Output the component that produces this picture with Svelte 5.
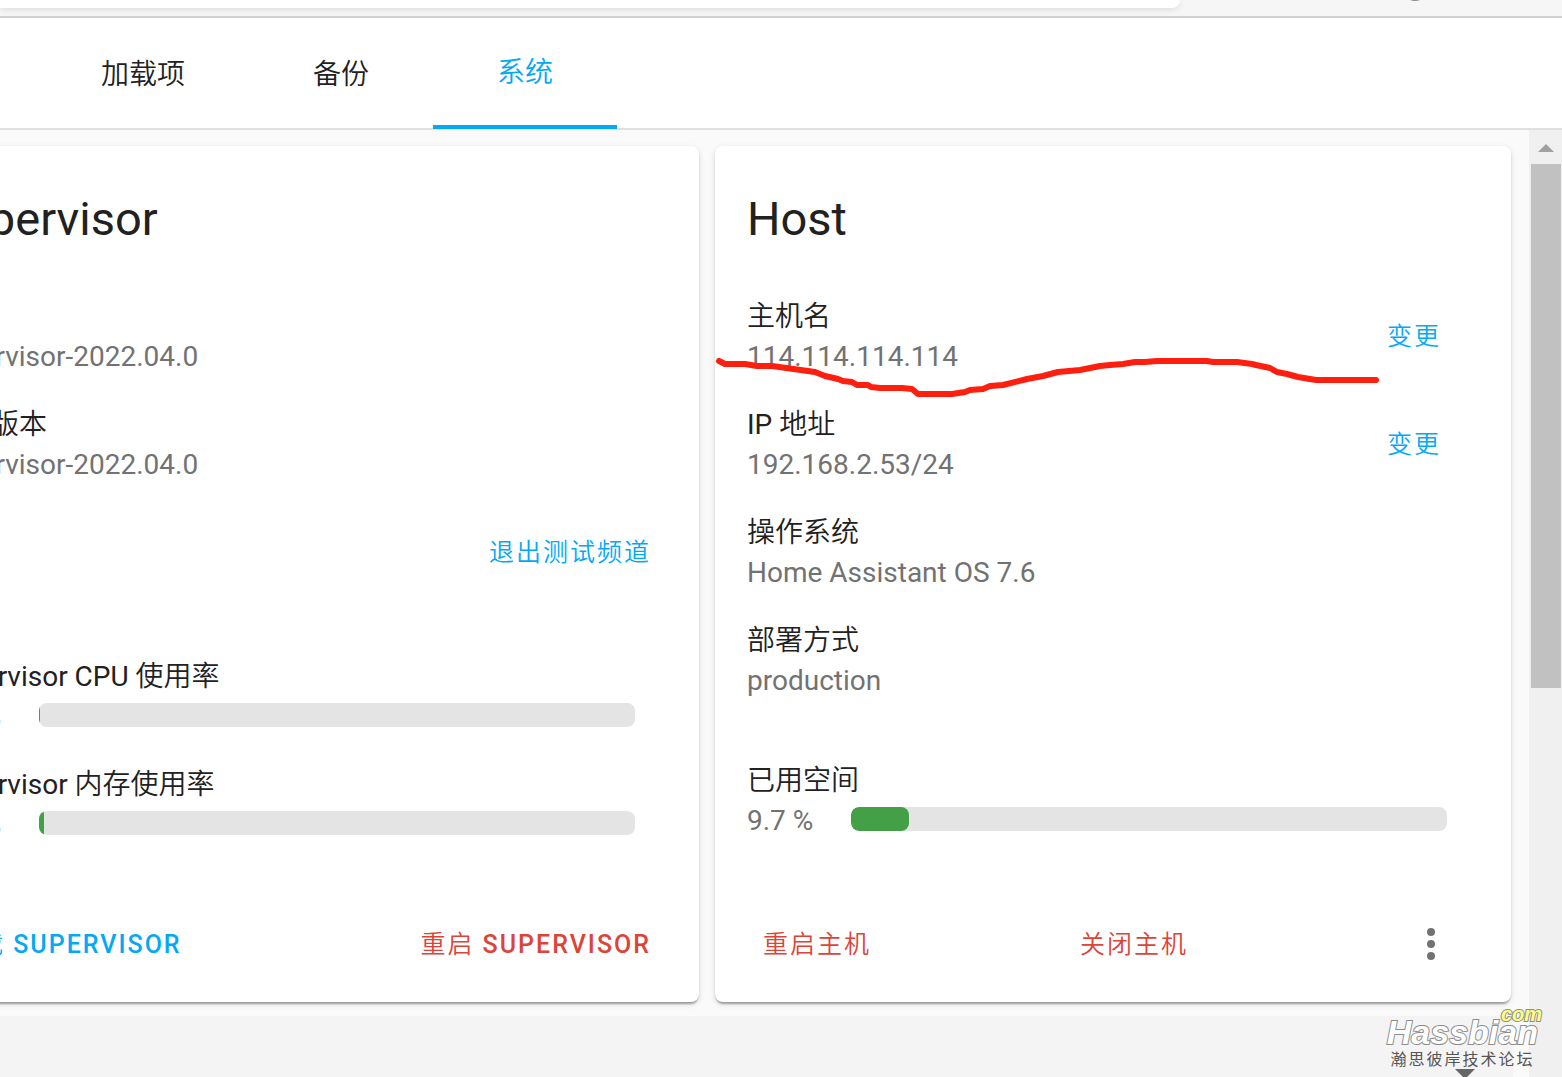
<script>
  const tabs = [
    { id: 'addons', label: '加载项' },
    { id: 'backups', label: '备份' },
    { id: 'system', label: '系统' }
  ];
  let activeTab = $state('system');

  const supervisorRows = [
    { label: '版本', value: 'supervisor-2022.04.0' },
    { label: '最新版本', value: 'supervisor-2022.04.0' },
    { label: '频道', value: 'beta', action: '退出测试频道' }
  ];
  const supervisorMetrics = [
    { label: 'Supervisor CPU 使用率', value: 0.1 },
    { label: 'Supervisor 内存使用率', value: 0.9 }
  ];

  const hostRows = [
    { label: '主机名', value: '114.114.114.114', action: '变更' },
    { label: 'IP 地址', value: '192.168.2.53/24', action: '变更' },
    { label: '操作系统', value: 'Home Assistant OS 7.6' },
    { label: '部署方式', value: 'production' }
  ];
  const hostMetrics = [{ label: '已用空间', value: 9.7 }];
</script>

{#snippet settingsRow(row)}
  <div class="row">
    <div class="row-text">
      <span class="label">{row.label}</span>
      <span class="value">{row.value}</span>
    </div>
    {#if row.action}
      <button class="text-button">{row.action}</button>
    {/if}
  </div>
{/snippet}

{#snippet metric(item)}
  <div class="row metric">
    <span class="label">{item.label}</span>
    <div class="metric-line">
      <span class="value">{item.value} %</span>
      <div class="bar" role="meter" aria-label={item.label} aria-valuenow={item.value} aria-valuemin="0" aria-valuemax="100">
        <div class="bar-fill" style="width: {item.value}%"></div>
      </div>
    </div>
  </div>
{/snippet}

<div class="page">
  <div class="browser-bar">
    <div class="address"></div>
    <svg class="profile" viewBox="0 0 24 24" aria-hidden="true">
      <circle cx="12" cy="12" r="11" fill="none" stroke="#8a8a8a" stroke-width="2" />
    </svg>
  </div>

  <nav class="tabs">
    {#each tabs as tab}
      <button class="tab" class:active={tab.id === activeTab} onclick={() => (activeTab = tab.id)}>
        {tab.label}
      </button>
    {/each}
  </nav>

  <div class="view">
    <main class="content">
      <div class="cards">
        <section class="card supervisor">
          <h1>Supervisor</h1>
          <div class="card-content">
            <div>
              {#each supervisorRows as row}
                {@render settingsRow(row)}
              {/each}
            </div>
            <div class="metrics">
              {#each supervisorMetrics as item}
                {@render metric(item)}
              {/each}
            </div>
          </div>
          <div class="card-actions">
            <button class="text-button">重载 <span class="latin">Supervisor</span></button>
            <button class="text-button warning">重启 <span class="latin">Supervisor</span></button>
          </div>
        </section>

        <section class="card host">
          <h1>Host</h1>
          <div class="card-content">
            <div>
              {#each hostRows as row}
                {@render settingsRow(row)}
              {/each}
            </div>
            <div class="metrics">
              {#each hostMetrics as item}
                {@render metric(item)}
              {/each}
            </div>
          </div>
          <div class="card-actions">
            <button class="text-button warning">重启主机</button>
            <button class="text-button warning">关闭主机</button>
            <button class="menu-button" aria-label="菜单">
              <svg viewBox="0 0 24 24" aria-hidden="true">
                <path fill="currentColor" d="M12,16A2,2 0 0,1 14,18A2,2 0 0,1 12,20A2,2 0 0,1 10,18A2,2 0 0,1 12,16M12,10A2,2 0 0,1 14,12A2,2 0 0,1 12,14A2,2 0 0,1 10,12A2,2 0 0,1 12,10M12,4A2,2 0 0,1 14,6A2,2 0 0,1 12,8A2,2 0 0,1 10,6A2,2 0 0,1 12,4Z" />
              </svg>
            </button>
          </div>
          <!-- freehand marker stroke over the host name -->
          <svg class="marker" viewBox="0 0 670 50" aria-hidden="true">
            <path d="M4 7 L10 10 H30 L42 12 H57 L100 18 L110 22 L123 25 L128 27 L137 28 L142 31 H153 L156 33 L165 34 H187 L197 35 L203 40 H237 L250 38 L255 36 L268 35 L275 32 L288 31 L312 25 L328 22 L343 18 L365 16 L385 12 L395 11 L408 10 L420 8 H430 L442 7 H492 L498 8 H522 L537 10 L541 11 L555 14 L562 18 L572 20 L583 23 L595 25 L601 26 H661" />
          </svg>
        </section>
      </div>

      <div class="log-panel">
        <select class="log-select" aria-label="日志提供者"><option></option></select>
        <svg class="log-arrow" viewBox="0 0 20 10" aria-hidden="true">
          <path d="M0 0H20L10 10Z" fill="#666" />
        </svg>
      </div>
    </main>

    <div class="scrollbar" aria-hidden="true">
      <svg class="scroll-up" viewBox="0 0 16 8"><path d="M8 0L16 8H0Z" fill="#a0a0a0" /></svg>
      <div class="thumb"></div>
    </div>
  </div>

  <div class="watermark">
    <span class="com">com</span>
    <span class="brand">Hassbian</span>
    <span class="forum">瀚思彼岸技术论坛</span>
  </div>
</div>

<style>
  :global(body) {
    margin: 0;
    background: #fafafa;
  }

  .page {
    position: relative;
    display: flex;
    flex-direction: column;
    height: 100vh;
    overflow: hidden;
    color: #212121;
    font-family: Roboto, 'Noto Sans CJK SC DemiLight', 'Noto Sans CJK SC', sans-serif;
    font-size: 28px;
    line-height: 40px;
  }

  button {
    border: 0;
    margin: 0;
    background: none;
    font: inherit;
    color: inherit;
    cursor: pointer;
  }

  .browser-bar {
    position: relative;
    flex: none;
    height: 16px;
    overflow: hidden;
    background: #f6f6f6;
    border-bottom: 2px solid #d0d0d0;
  }

  .address {
    width: 76%;
    max-width: 1180px;
    height: 8px;
    background: #fff;
    border-radius: 0 0 8px 0;
    box-shadow: 0 2px 6px rgba(0, 0, 0, 0.1);
  }

  .profile {
    position: absolute;
    top: -23px;
    right: 135px;
    width: 24px;
    height: 24px;
  }

  .tabs {
    display: flex;
    flex: none;
    height: 110px;
    padding-left: 37px;
    background: #fff;
    border-bottom: 2px solid #e0e0e0;
  }

  .tab {
    box-sizing: border-box;
    padding: 2px 64px 0;
    height: 111px;
  }

  .tab.active {
    color: #03a9f4;
    border-bottom: 4px solid #03a9f4;
  }

  .view {
    display: flex;
    flex: 1;
    min-height: 0;
  }

  .content {
    flex: 1;
    display: flex;
    flex-direction: column;
    min-width: 0;
    overflow: hidden;
  }

  /* the view is panned to the right, so the first card starts off screen */
  .cards {
    display: grid;
    grid-template-columns: 1fr 1fr;
    gap: 16px;
    margin-left: -97px;
    padding: 16px 18px 14px 0;
  }

  .card {
    position: relative;
    display: flex;
    flex-direction: column;
    background: #fff;
    border-radius: 8px;
    box-shadow: 0 4px 2px -2px rgba(0, 0, 0, 0.2), 0 2px 2px rgba(0, 0, 0, 0.14), 0 2px 6px rgba(0, 0, 0, 0.12);
  }

  h1 {
    margin: 0;
    padding: 41px 32px 32px;
    font-size: 47px;
    line-height: 64px;
    font-weight: 400;
  }

  .card-content {
    display: flex;
    flex: 1;
    flex-direction: column;
    justify-content: space-between;
    padding: 0 64px 31px 32px;
  }

  .supervisor .card-content {
    padding-bottom: 27px;
  }

  .host .metrics {
    margin-top: 32px;
  }

  .row {
    display: flex;
    align-items: center;
    justify-content: space-between;
    height: 108px;
  }

  .row-text {
    display: flex;
    flex-direction: column;
  }

  .label {
    color: #212121;
  }

  .value {
    color: #727272;
  }

  .metric {
    flex-direction: column;
    align-items: stretch;
    justify-content: center;
  }

  .metric-line {
    display: flex;
    align-items: center;
  }

  .metric-line .value {
    width: 104px;
  }

  .bar {
    flex: 1;
    height: 24px;
    margin-bottom: 5px;
    overflow: hidden;
    background: #e4e4e4;
    border-radius: 8px;
  }

  .bar-fill {
    height: 100%;
    background: #43a047;
    border-radius: 8px;
  }

  .text-button {
    padding: 0 6px;
    color: #03a9f4;
    font-size: 25px;
    letter-spacing: 2px;
    text-transform: uppercase;
    white-space: nowrap;
  }

  .latin {
    font-weight: 500;
  }

  .row .text-button {
    margin-right: -22px;
  }

  .host .row .text-button {
    margin-right: 0;
  }

  .text-button.warning {
    color: #db4437;
  }

  .card-actions {
    display: flex;
    align-items: center;
    justify-content: space-between;
    height: 116px;
    padding: 0 42px;
  }

  .card-actions .text-button {
    padding-top: 2px;
  }

  .menu-button {
    display: flex;
    padding: 0 0 0 16px;
    margin-right: 14px;
    color: #727272;
  }

  .menu-button svg {
    width: 48px;
    height: 48px;
  }

  .marker {
    position: absolute;
    top: 208px;
    left: 0;
    width: 670px;
    height: 50px;
    pointer-events: none;
  }

  .marker path {
    fill: none;
    stroke: #ff1f0f;
    stroke-width: 6;
    stroke-linecap: round;
    stroke-linejoin: round;
  }

  .log-panel {
    position: relative;
    flex: 1;
    margin-right: 16px;
    background: #f4f4f4;
  }

  .log-select {
    width: 100%;
    height: 100%;
    border: 0;
    appearance: none;
    background: transparent;
  }

  .log-arrow {
    position: absolute;
    right: 38px;
    bottom: -2px;
    width: 20px;
    height: 10px;
  }

  .scrollbar {
    display: flex;
    flex: none;
    flex-direction: column;
    align-items: center;
    width: 33px;
    background: #f0f0f0;
  }

  .scroll-up {
    width: 16px;
    height: 8px;
    margin: 14px 0 12px;
  }

  .thumb {
    width: 30px;
    height: 524px;
    background: #c1c1c1;
  }

  .watermark {
    position: absolute;
    right: 24px;
    bottom: 7px;
    display: flex;
    flex-direction: column;
    align-items: center;
    pointer-events: none;
    color: #fff;
    font-family: 'Liberation Sans', 'Noto Sans CJK SC', sans-serif;
  }

  .brand,
  .com {
    font-style: italic;
    font-weight: 700;
    paint-order: stroke fill;
    -webkit-text-stroke: 2px #8c8c8c;
  }

  .brand {
    font-size: 34px;
    line-height: 36px;
  }

  .com {
    position: absolute;
    top: -12px;
    right: -4px;
    color: #ffff80;
    font-size: 20px;
    line-height: 24px;
  }

  .forum {
    color: #555;
    font-size: 16px;
    line-height: 20px;
    letter-spacing: 2px;
  }
</style>
